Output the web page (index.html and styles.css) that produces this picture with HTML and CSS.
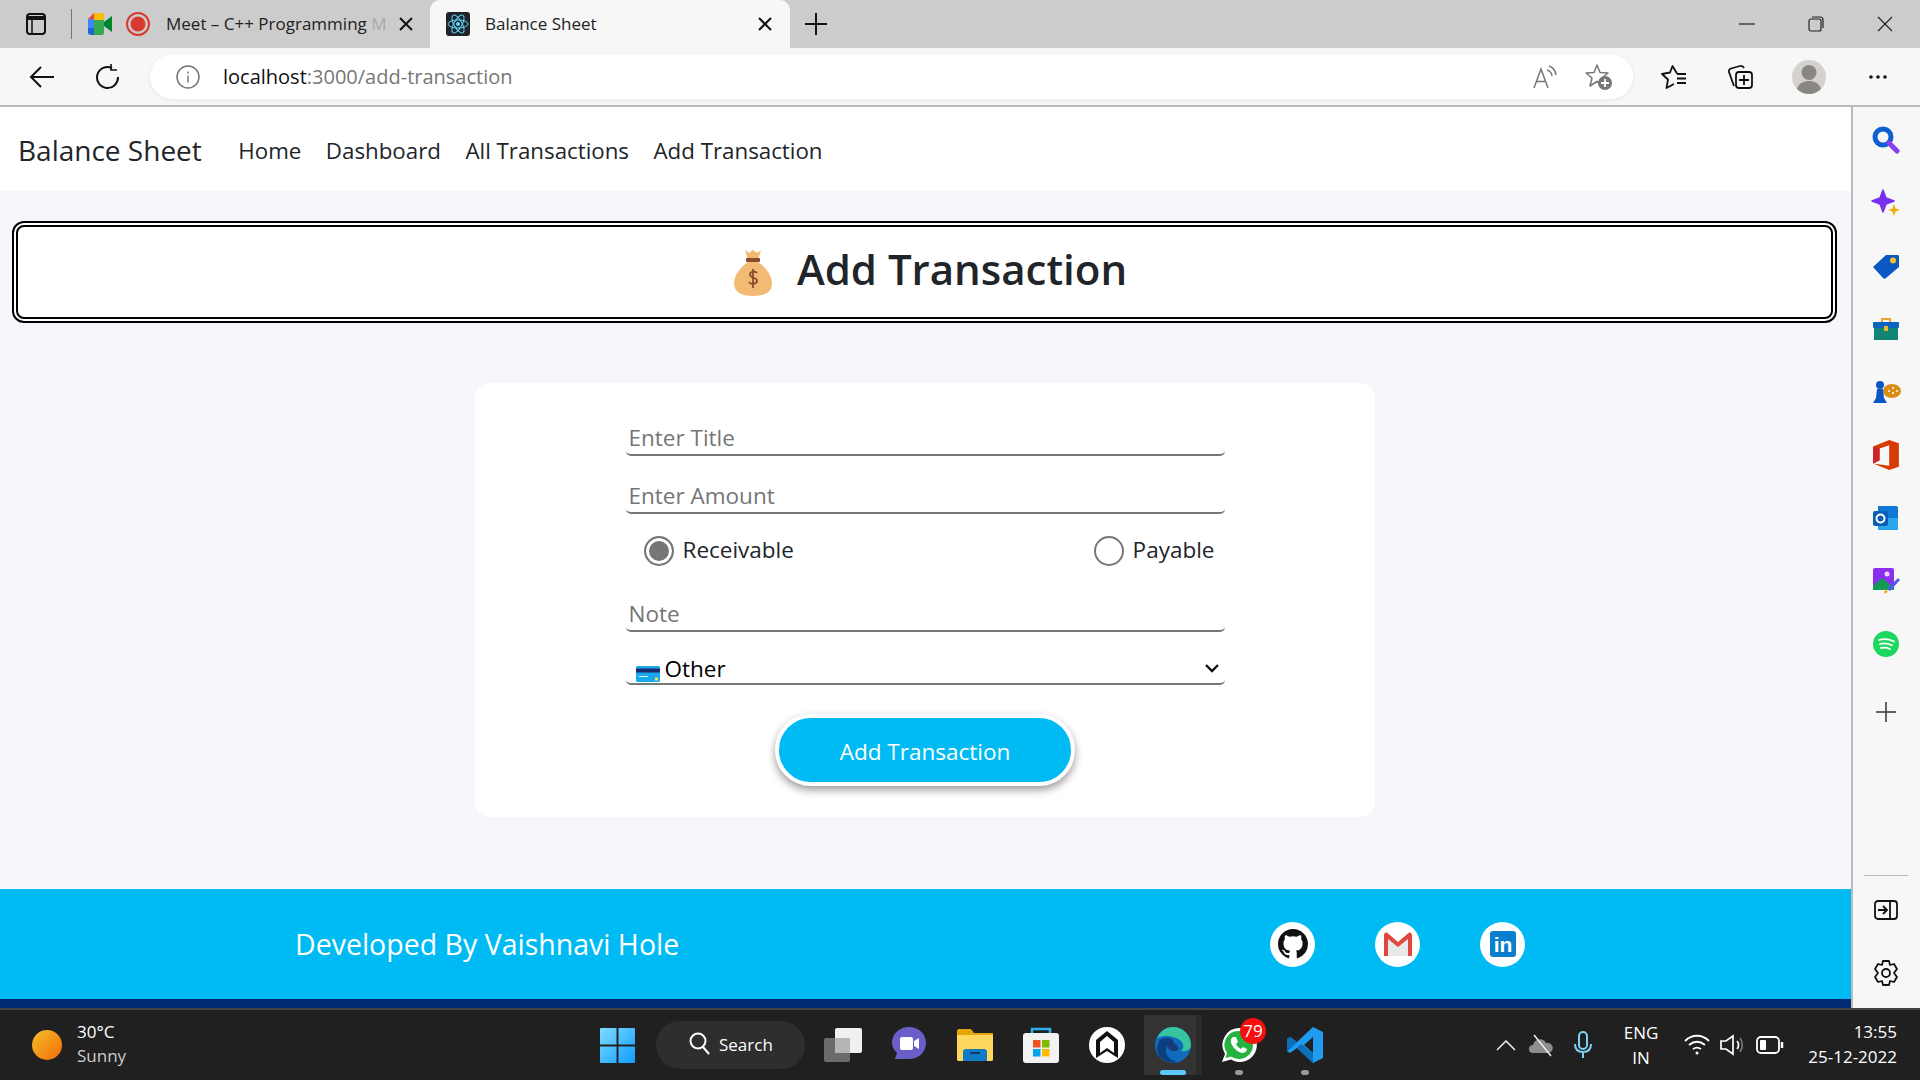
FILE: index.html
```html
<!DOCTYPE html>
<html>

	<head>
		<meta charset="UTF-8">
		<title>Balance Sheet</title>
		<link rel="stylesheet" href="styles.css">
	</head>

	<body>
		<div class="tabbar">
			<svg class="tab-panel" width="24" height="24" viewBox="0 0 24 24" fill="none" stroke="#111" stroke-width="2"><rect x="3" y="2" width="18" height="20" rx="3"/><path d="M3 6h18" stroke-width="4"/><path d="M8 8v13" stroke-width="1.5"/></svg>
			<span class="tab-divider"></span>
			<div class="tab tab-meet">
				<svg width="24" height="22" viewBox="0 0 24 22"><path d="M0 6l6-6h8v7H6v8H0z" fill="#ea4335"/><path d="M0 6h6v9H0z" fill="#4285f4"/><path d="M0 15h6v7H3a3 3 0 0 1-3-3z" fill="#1967d2"/><path d="M6 15h8v7H6z" fill="#34a853"/><path d="M6 0h8a2 2 0 0 1 2 2v5H6z" fill="#fbbc04"/><path d="M6 7h10v13a2 2 0 0 1-2 2h-3V15H6z" fill="#34a853"/><path d="M16 9l8-6v16l-8-6z" fill="#00832d"/></svg>
				<svg class="tab-rec" width="24" height="24" viewBox="0 0 24 24"><circle cx="12" cy="12" r="11" fill="none" stroke="#d93a30" stroke-width="2"/><circle cx="12" cy="12" r="7.5" fill="#d93a30"/></svg>
				<span class="tab-title">Meet – C++ Programming <span class="tab-fade">M</span></span>
				<svg class="tab-close" width="14" height="14" viewBox="0 0 14 14" stroke="#111" stroke-width="2"><path d="M1 1l12 12M13 1L1 13"/></svg>
			</div>
			<div class="tab tab-active">
				<svg width="24" height="24" viewBox="0 0 24 24" fill="none" stroke="#61dafb" stroke-width="1"><rect width="24" height="24" rx="3" fill="#20232a" stroke="none"/><ellipse cx="12" cy="12" rx="10" ry="4"/><ellipse cx="12" cy="12" rx="10" ry="4" transform="rotate(60 12 12)"/><ellipse cx="12" cy="12" rx="10" ry="4" transform="rotate(120 12 12)"/><circle cx="12" cy="12" r="2" fill="#61dafb" stroke="none"/></svg>
				<span class="tab-name">Balance Sheet</span>
				<svg class="tab-close" width="14" height="14" viewBox="0 0 14 14" stroke="#111" stroke-width="2"><path d="M1 1l12 12M13 1L1 13"/></svg>
			</div>
			<svg class="tab-new" width="24" height="24" viewBox="0 0 24 24" stroke="#111" stroke-width="2"><path d="M12 1v22M1 12h22"/></svg>
			<div class="win-controls">
				<svg width="16" height="16" viewBox="0 0 16 16" stroke="#222" stroke-width="1.2"><path d="M0 8h16"/></svg>
				<svg width="16" height="16" viewBox="0 0 16 16" fill="none" stroke="#222" stroke-width="1.2"><rect x="1" y="3" width="12" height="12" rx="2"/><path d="M4 1h8a3 3 0 0 1 3 3v8"/></svg>
				<svg width="16" height="16" viewBox="0 0 16 16" stroke="#222" stroke-width="1.2"><path d="M1 1l14 14M15 1L1 15"/></svg>
			</div>
		</div>

		<div class="toolbar">
			<svg class="tool-back" width="26" height="24" viewBox="0 0 26 24" fill="none" stroke="#111" stroke-width="2"><path d="M25 12H2M12 2L2 12l10 10"/></svg>
			<svg class="tool-reload" width="26" height="26" viewBox="0 0 26 26" fill="none" stroke="#111" stroke-width="2"><path d="M17 4a10.5 10.5 0 1 0 6 9"/><path d="M17 0v6h6" stroke-width="1.6" transform="translate(-1 0)"/></svg>
			<div class="address">
				<svg width="24" height="24" viewBox="0 0 24 24" fill="none" stroke="#777" stroke-width="1.5"><circle cx="12" cy="12" r="11"/><path d="M12 10.5v7M12 6.5v2"/></svg>
				<span class="url"><b>localhost</b>:3000/add-transaction</span>
				<svg class="addr-read" width="26" height="24" viewBox="0 0 26 24" fill="none" stroke="#777" stroke-width="1.5"><path d="M2 23L9 4l7 19M4.500 16.500h9"/><path d="M15 5a7 7 0 0 1 5 6M17 1a11 11 0 0 1 7 9"/></svg>
				<svg class="addr-star" width="28" height="28" viewBox="0 0 28 28"><path d="M12 2l3 7.500 8 .5-6 5 2 8-7-4.500L5 23l2-8-6-5 8-.5z" fill="none" stroke="#777" stroke-width="1.5" stroke-linejoin="round"/><circle cx="20" cy="20" r="7" fill="#777"/><path d="M20 16v8M16 20h8" stroke="#fff" stroke-width="1.800"/></svg>
			</div>
			<svg class="tool-fav" width="26" height="26" viewBox="0 0 26 26" fill="none" stroke="#111" stroke-width="1.800" stroke-linejoin="round"><path d="M16 9.500L11.500 2 9 8.500 1 10l6 5.500L5.500 24l7.500-4"/><path d="M16 10h9M16 14.500h9M16 19h9"/></svg>
			<svg class="tool-coll" width="26" height="26" viewBox="0 0 26 26" fill="none" stroke="#111" stroke-width="1.800"><path d="M7 22L2 8c-.5-2 .5-3 2-3.500L13 2c2-.5 3 0 4 2"/><rect x="9" y="8" width="16" height="16" rx="3"/><path d="M17 11v10M12 16h10"/></svg>
			<svg class="tool-user" width="34" height="34" viewBox="0 0 34 34"><circle cx="17" cy="17" r="17" fill="#d3d2ce"/><circle cx="17" cy="12.500" r="7.500" fill="#8a8783"/><path d="M5 29c2-6 7-8 12-8s10 2 12 8a17 17 0 0 1-24 0z" fill="#8a8783"/></svg>
			<svg class="tool-more" width="20" height="6" viewBox="0 0 20 6" fill="#111"><circle cx="3" cy="3" r="1.800"/><circle cx="10" cy="3" r="1.800"/><circle cx="17" cy="3" r="1.800"/></svg>
		</div>

		<div class="browser">
			<div class="page">
				<nav class="navbar">
					<a class="brand">Balance Sheet</a>
					<a class="nav-link">Home</a>
					<a class="nav-link">Dashboard</a>
					<a class="nav-link">All Transactions</a>
					<a class="nav-link">Add Transaction</a>
				</nav>

				<div class="page-head">
					<svg width="38" height="48" viewBox="0 0 38 48"><path d="M11 2l4 3 4-3 4 3 4-3-3 10H14z" fill="#f0b86e"/><rect x="12" y="10" width="14" height="4" rx="1" fill="#8a4b2d"/><path d="M14 14h10c8 5 14 14 14 21 0 9-7 13-19 13S0 44 0 35c0-7 6-16 14-21z" fill="#f2bb74"/><path d="M23 25c-1-2-7-2-7 1.500 0 4 7 2.500 7 6.500 0 3.500-7 3.500-8 1M19 21v19" fill="none" stroke="#8a4b2d" stroke-width="1.800"/></svg>
					<h1>Add Transaction</h1>
				</div>

				<div class="card">
					<form class="add-form">
						<input class="field" type="text" placeholder="Enter Title">
						<input class="field field-amount" type="text" placeholder="Enter Amount">
						<div class="radio-row">
							<label class="radio"><input type="radio" name="kind" checked> Receivable</label>
							<label class="radio"><input type="radio" name="kind"> Payable</label>
						</div>
						<input class="field" type="text" placeholder="Note">
						<div class="select">
							<svg class="select-card" width="24" height="16" viewBox="0 0 24 16"><rect width="24" height="16" rx="1.500" fill="#18a8ee"/><rect y="2.500" width="24" height="4" fill="#1b2a6b"/><path d="M3 10h9v1H3z" fill="#d9f1ff"/><rect x="19" y="11.500" width="3" height="3" fill="#f7e34b"/></svg>
							<span>Other</span>
							<svg class="select-arrow" width="14" height="9" viewBox="0 0 14 9" fill="none" stroke="#111" stroke-width="2.400"><path d="M1 1l6 6 6-6"/></svg>
						</div>
						<button class="submit" type="button">Add Transaction</button>
					</form>
				</div>

				<footer class="footer">
					<span class="footer-text">Developed By Vaishnavi Hole</span>
					<div class="socials">
						<a class="social"><svg width="30" height="30" viewBox="0 0 16 16" fill="#111"><path d="M8 0C3.580 0 0 3.580 0 8c0 3.540 2.290 6.530 5.470 7.590.4.070.55-.17.55-.38 0-.19-.01-.82-.01-1.490-2.010.37-2.530-.49-2.690-.94-.09-.23-.48-.94-.82-1.130-.28-.15-.68-.52-.01-.53.63-.01 1.080.58 1.230.82.72 1.210 1.870.87 2.330.66.07-.52.28-.87.51-1.070-1.780-.2-3.640-.89-3.640-3.950 0-.87.31-1.590.82-2.150-.08-.2-.36-1.020.08-2.120 0 0 .67-.21 2.200.82.64-.18 1.320-.27 2-.27.68 0 1.360.09 2 .27 1.530-1.040 2.200-.82 2.200-.82.44 1.100.16 1.920.08 2.120.51.56.82 1.270.82 2.150 0 3.070-1.870 3.750-3.650 3.950.29.25.54.73.54 1.480 0 1.070-.01 1.930-.01 2.200 0 .21.15.46.55.38A8.013 8.013 0 0 0 16 8c0-4.420-3.580-8-8-8z"/></svg></a>
						<a class="social"><svg width="30" height="24" viewBox="0 0 30 24"><path d="M3 4l12 10L27 4v20H3z" fill="#e8e8e8"/><path d="M1 24V3c0-2 2-3 3.500-2L15 10 25.500 1C27 0 29 1 29 3v21h-4V7L15 15 5 7v17z" fill="#e0483e"/></svg></a>
						<a class="social"><svg width="26" height="26" viewBox="0 0 26 26"><rect width="26" height="26" rx="3" fill="#0a7fd0"/><text x="13" y="21" text-anchor="middle" font-family="Liberation Sans" font-weight="bold" font-size="21" fill="#fff">in</text></svg></a>
					</div>
				</footer>
			</div>

			<aside class="sidebar">
				<div class="side-item"><svg width="28" height="28" viewBox="0 0 28 28"><circle cx="11" cy="11" r="8" fill="none" stroke="#0f5fd0" stroke-width="5"/><path d="M17 17l8 8" stroke="#8a3ff0" stroke-width="5" stroke-linecap="round"/></svg></div>
				<div class="side-item"><svg width="30" height="28" viewBox="0 0 30 28"><path d="M12 1l3 8 8 3-8 3-3 8-3-8-8-3 8-3z" fill="#7a2ff0" stroke="#7a2ff0" stroke-width="1.500" stroke-linejoin="round"/><path d="M23 15l1.600 4.400L29 21l-4.400 1.600L23 27l-1.600-4.400L17 21l4.400-1.600z" fill="#f2ab10"/></svg></div>
				<div class="side-item"><svg width="28" height="28" viewBox="0 0 28 28"><path d="M1 15L14 3h12a2 2 0 0 1 1 1v11L14 26c-1 1-2 1-3 0z" fill="#0b58c4"/><circle cx="21" cy="8.500" r="3" fill="#f6c12c"/></svg></div>
				<div class="side-item"><svg width="28" height="24" viewBox="0 0 28 24"><path d="M10 6V2h8v4" fill="none" stroke="#e6a52a" stroke-width="2"/><rect x="1" y="5" width="26" height="6" rx="1" fill="#0b64c0"/><rect x="2" y="11" width="24" height="12" fill="#118473"/><rect x="12" y="9" width="4" height="5" fill="#f0b72c"/></svg></div>
				<div class="side-item"><svg width="30" height="26" viewBox="0 0 30 26"><ellipse cx="21" cy="12" rx="9" ry="7" fill="#db8c14"/><circle cx="9" cy="6" r="4" fill="#0b58c4"/><path d="M6 10h6l1 9 3 5H2l3-5z" fill="#0b58c4"/><g fill="#fff"><circle cx="18" cy="12" r="1"/><circle cx="22" cy="9" r="1"/><circle cx="22" cy="14" r="1"/><circle cx="26" cy="12" r="1"/></g></svg></div>
				<div class="side-item"><svg width="26" height="30" viewBox="0 0 24 28"><path d="M0 6L15 0l9 3v22l-9 3L0 22l15 2V5L6 8v11l-6 3z" fill="#d83b01"/><path d="M0 6l6 2v11l-6 3z" fill="#d0212f"/></svg></div>
				<div class="side-item"><svg width="26" height="26" viewBox="0 0 26 26"><path d="M5 1h18a2 2 0 0 1 2 2v22H5z" fill="#0f78d4"/><path d="M5 13h20v12H5z" fill="#28a8ea"/><rect y="6" width="15" height="15" rx="2" fill="#0a5fb4"/><circle cx="7.500" cy="13.500" r="4" fill="none" stroke="#fff" stroke-width="2"/></svg></div>
				<div class="side-item"><svg width="30" height="28" viewBox="0 0 30 28"><rect x="2" y="1" width="21" height="22" rx="2" fill="#8a2ff0"/><circle cx="16" cy="7" r="2.500" fill="#f3d4ff"/><path d="M2 19l9-8 12 10v2H2z" fill="#129a53"/><path d="M16 22L27 11l2 2-10 11z" fill="#4d5cf0"/><path d="M14 22l3 3-4 2z" fill="#f2ab10"/></svg></div>
				<div class="side-item"><svg width="26" height="26" viewBox="0 0 26 26"><circle cx="13" cy="13" r="13" fill="#1ed760"/><path d="M6 9c5-1.500 10-1 15 1.500M7 13c4-1 8-.7 12 1.200M8 17c3-.7 6-.5 9 1" fill="none" stroke="#fff" stroke-width="1.800" stroke-linecap="round"/></svg></div>
				<div class="side-item side-plus"><svg width="20" height="20" viewBox="0 0 20 20" stroke="#333" stroke-width="1.500"><path d="M10 0v20M0 10h20"/></svg></div>
				<div class="side-bottom">
					<span class="side-rule"></span>
					<svg width="24" height="20" viewBox="0 0 24 20" fill="none" stroke="#111" stroke-width="1.800"><rect x="1" y="1" width="22" height="18" rx="3"/><path d="M16 1v18M4 10h8M9 6l4 4-4 4"/></svg>
					<svg width="26" height="28" viewBox="0 0 26 28" fill="none" stroke="#111" stroke-width="1.800"><path d="M10 2h6l1 4 4-1 3 5-3 4 3 4-3 5-4-1-1 4h-6l-1-4-4 1-3-5 3-4-3-4 3-5 4 1z" stroke-linejoin="round"/><circle cx="13" cy="14" r="4"/></svg>
				</div>
			</aside>
		</div>

		<div class="taskbar">
			<div class="weather">
				<span class="sun"></span>
				<div class="weather-text">
					<div>30°C</div>
					<div class="weather-sub">Sunny</div>
				</div>
			</div>
			<svg class="win-logo" width="35" height="35" viewBox="0 0 36 36"><defs><linearGradient id="wl" x1="0" y1="0" x2="1" y2="1"><stop offset="0" stop-color="#7fdcff"/><stop offset="1" stop-color="#0f9cff"/></linearGradient></defs><path d="M0 1a1 1 0 0 1 1-1h16v17H0zM19 0h16a1 1 0 0 1 1 1v16H19zM0 19h17v17H1a1 1 0 0 1-1-1zM19 19h17v16a1 1 0 0 1-1 1H19z" fill="url(#wl)"/></svg>
			<div class="search">
				<svg width="22" height="24" viewBox="0 0 22 24" fill="none" stroke="#fff" stroke-width="2"><circle cx="9" cy="9" r="7.500"/><path d="M14 15l6 7"/></svg>
				<span>Search</span>
			</div>
			<div class="task-icons">
				<div class="task"><svg width="38" height="34" viewBox="0 0 38 34"><rect x="0" y="10" width="26" height="24" rx="2" fill="#6b6b6b"/><rect x="11" y="0" width="27" height="25" rx="2" fill="#f0f0f0"/><rect x="11" y="10" width="15" height="15" fill="#b5b5b5"/></svg></div>
				<div class="task"><svg width="34" height="36" viewBox="0 0 34 36"><path d="M17 0c10 0 17 7 17 16s-7 16-17 16H3l2-6C2 23 0 20 0 16 0 7 7 0 17 0z" fill="#6a5fc9"/><rect x="8" y="10" width="13" height="13" rx="2" fill="#fff"/><path d="M22 14l5-3v11l-5-3z" fill="#fff"/></svg></div>
				<div class="task"><svg width="36" height="32" viewBox="0 0 36 32"><path d="M0 2a2 2 0 0 1 2-2h12l3 4h19v26a2 2 0 0 1-2 2H2a2 2 0 0 1-2-2z" fill="#e5a50a"/><path d="M0 6h36v24a2 2 0 0 1-2 2H2a2 2 0 0 1-2-2z" fill="#ffd75e"/><path d="M6 32v-9a3 3 0 0 1 3-3h18a3 3 0 0 1 3 3v9z" fill="#0f7bc4"/><path d="M13 24h10" stroke="#083f6e" stroke-width="2"/></svg></div>
				<div class="task"><svg width="36" height="36" viewBox="0 0 36 36"><path d="M9 7V2h18v5" fill="none" stroke="#2fb0ee" stroke-width="2.500"/><rect y="6" width="36" height="30" rx="3" fill="#f2f2f2"/><rect x="10" y="13" width="7.500" height="7.500" fill="#f25022"/><rect x="19" y="13" width="7.500" height="7.500" fill="#7fba00"/><rect x="10" y="22" width="7.500" height="7.500" fill="#00a4ef"/><rect x="19" y="22" width="7.500" height="7.500" fill="#ffb900"/></svg></div>
				<div class="task"><svg width="36" height="36" viewBox="0 0 36 36"><circle cx="18" cy="18" r="18" fill="#fff"/><path d="M18 4L7 13v18l11-7 11 7V13z" fill="#111"/><path d="M18 9l-7 6v11l7-5 7 5V15z" fill="#fff"/></svg></div>
				<div class="task task-active"><svg width="36" height="36" viewBox="0 0 36 36"><circle cx="18" cy="18" r="18" fill="#0f6cbd"/><path d="M2 12C5 4 11 0 18 0c10 0 18 8 18 18 0 5-5 7-10 6 3-2 3-7 0-10C20 9 6 7 2 12z" fill="#37c5a0"/><path d="M4 14c5-5 14-4 15 2-2-1-8 0-8 7 0 6 5 11 12 12-12 3-21-5-21-14z" fill="#0a3f80"/><path d="M19 16c4 3 7 8 1 8-5 0-9-3-8-8 1-2 5-2 7 0z" fill="#173a7a"/></svg><span class="run-bar"></span></div>
				<div class="task"><svg width="38" height="38" viewBox="0 0 38 38"><path d="M19 2A17 17 0 0 0 5 28L2 36l9-2.500A17 17 0 1 0 19 2z" fill="#fff"/><path d="M19 5A14 14 0 0 0 7 27l-1.500 5 5.500-1.500A14 14 0 1 0 19 5z" fill="#25b340"/><path d="M13 11c-2 1-3 4-1 8 2 4 6 7 10 8 3 0 5-2 5-4l-4-2-2 2c-2-1-4-3-5-5l2-2-2-5z" fill="#fff"/></svg><span class="badge">79</span><span class="run-dot"></span></div>
				<div class="task"><svg width="36" height="36" viewBox="0 0 36 36"><path d="M26 0l10 5v26l-10 5L10 21l-7 5-3-2v-12l3-2 7 5zM26 10l-9 8 9 8z" fill="#1f9cf0" fill-rule="evenodd"/><path d="M26 0L3 22l-3 2v-12l3-2 7 5L26 0zM26 36l-16-15 4-4 12 9z" fill="#0c6fba"/></svg><span class="run-dot"></span></div>
			</div>
			<div class="tray">
				<svg class="tray-up" width="20" height="11" viewBox="0 0 20 11" fill="none" stroke="#eee" stroke-width="1.500"><path d="M1 10l9-9 9 9"/></svg>
				<svg class="tray-cloud" width="26" height="24" viewBox="0 0 26 24"><path d="M5 20a4 4 0 0 1 0-8 7 7 0 0 1 13-2 5 5 0 0 1 3 10z" fill="#8e8e8e"/><path d="M6 2l17 21" stroke="#eee" stroke-width="1.500"/></svg>
				<svg class="tray-mic" width="18" height="28" viewBox="0 0 18 28" fill="none" stroke="#7fd0f2" stroke-width="2"><rect x="5" y="1" width="8" height="17" rx="4"/><path d="M1 13c0 5 3 8 8 8s8-3 8-8M9 21v6"/></svg>
				<div class="lang"><div>ENG</div><div>IN</div></div>
				<svg class="tray-wifi" width="26" height="22" viewBox="0 0 26 22" fill="none" stroke="#fff" stroke-width="1.800"><path d="M1 7c7-7 17-7 24 0M5 11c5-4 11-4 16 0M9 15c3-2 5-2 8 0"/><circle cx="13" cy="19" r="1.500" fill="#fff" stroke="none"/></svg>
				<svg class="tray-sound" width="26" height="22" viewBox="0 0 26 22" fill="none" stroke="#fff" stroke-width="1.700"><path d="M1 7v8h5l7 5V2L6 7z"/><path d="M17 7c2 2 2 6 0 8"/><path d="M20 4c3 4 3 10 0 14" stroke="#777"/></svg>
				<svg class="tray-battery" width="28" height="20" viewBox="0 0 28 20" fill="none" stroke="#fff" stroke-width="1.800"><rect x="1" y="2" width="22" height="16" rx="4"/><rect x="4" y="5" width="6" height="10" rx="1" fill="#fff" stroke="none"/><path d="M26 7v6" stroke-width="2.500"/></svg>
				<div class="clock"><div>13:55</div><div>25-12-2022</div></div>
			</div>
		</div>
	</body>

</html>
```

FILE: styles.css
```css
* {
	margin: 0;
	padding: 0;
	box-sizing: border-box;
}

html,
body {
	width: 1920px;
	height: 1080px;
	overflow: hidden;
}

body {
	display: flex;
	flex-direction: column;
	font-family: "Open Sans", "Liberation Sans", sans-serif;
	color: #212529;
}

svg {
	flex: none;
	display: block;
}

/* browser tabs */
.tabbar {
	height: 48px;
	background: #ccc;
	display: flex;
	align-items: center;
	font-size: 17px;
	color: #222;
}

.tab-panel {
	margin-left: 24px;
}

.tab-divider {
	width: 1px;
	height: 30px;
	background: #777;
	margin: 0 16px 0 23px;
}

.tab {
	display: flex;
	align-items: center;
}

.tab-meet {
	width: 342px;
}

.tab-rec {
	margin-left: 14px;
}

.tab-title {
	width: 224px;
	margin: -2px 0 0 16px;
	white-space: nowrap;
}

.tab-fade {
	opacity: 0.2;
}

.tab-meet .tab-close {
	margin-left: 9px;
}

.tab-active {
	width: 360px;
	height: 48px;
	padding-left: 16px;
	background: #f7f7f7;
	border-radius: 10px 10px 0 0;
}

.tab-name {
	margin: -2px 0 0 15px;
}

.tab-active .tab-close {
	margin-left: auto;
	margin-right: 18px;
}

.tab-new {
	margin-left: 14px;
}

.win-controls {
	margin-left: auto;
	margin-right: 27px;
	display: flex;
	gap: 53px;
}

/* address bar */
.toolbar {
	height: 59px;
	background: #f7f7f7;
	border-bottom: 2px solid #bbb;
	display: flex;
	align-items: center;
}

.tool-back {
	margin-left: 29px;
}

.tool-reload {
	margin-left: 40px;
}

.address {
	width: 1483px;
	height: 45px;
	margin-left: 29px;
	background: #fff;
	border-radius: 23px;
	box-shadow: 0 1px 4px rgba(0, 0, 0, 0.08);
	display: flex;
	align-items: center;
	padding-left: 26px;
	font-size: 20px;
	color: #777;
}

.url {
	margin-left: 23px;
}

.url b {
	font-weight: 400;
	color: #111;
}

.addr-read {
	margin-left: auto;
}

.addr-star {
	margin: 0 20px 0 27px;
}

.tool-fav {
	margin-left: 28px;
}

.tool-coll {
	margin-left: 40px;
}

.tool-user {
	margin-left: 39px;
}

.tool-more {
	margin-left: 42px;
}

.browser {
	flex: 1;
	min-height: 0;
	display: flex;
}

/* the app */
.page {
	width: 1851px;
	background: #f5f7fb;
	display: flex;
	flex-direction: column;
}

.navbar {
	height: 84px;
	background: #fff;
	display: flex;
	align-items: center;
	padding: 2px 0 0 18px;
	gap: 24.5px;
	font-size: 22.3px;
}

.brand {
	font-size: 28px;
	margin-right: 12px;
}

.page-head {
	height: 102px;
	margin: 30px 14px 0 12px;
	padding: 0 0 8px 12px;
	background: #fff;
	border: 6px double #000;
	border-radius: 12px;
	display: flex;
	align-items: center;
	justify-content: center;
	gap: 25px;
}

.page-head svg {
	margin-top: 8px;
}

.page-head h1 {
	font-size: 42px;
	font-weight: 600;
}

.card {
	width: 900px;
	height: 434px;
	margin: 60px 0 0 475px;
	background: #fff;
	border-radius: 15px;
	padding-top: 34px;
}

.add-form {
	width: 599px;
	margin: 0 auto;
	display: flex;
	flex-direction: column;
}

.field {
	height: 39px;
	border: 0;
	border-bottom: 2px solid #777;
	border-radius: 5px;
	padding: 3px 0 0 3px;
	font: 22.5px "Open Sans", "Liberation Sans", sans-serif;
	outline: none;
}

.field::placeholder {
	color: #757575;
}

.field-amount {
	margin-top: 19px;
}

.radio-row {
	height: 79px;
	padding: 22px 10px 0 18px;
	display: flex;
	justify-content: space-between;
	font-size: 22.5px;
}

.radio {
	display: flex;
	align-items: flex-start;
	gap: 9px;
	line-height: 28px;
}

.radio input {
	appearance: none;
	width: 30px;
	height: 30px;
	border: 2px solid #767676;
	border-radius: 50%;
	background: #fff;
}

.radio input:checked {
	background: #767676;
	box-shadow: inset 0 0 0 3px #fff;
}

.select {
	height: 41px;
	margin-top: 12px;
	border-bottom: 2px solid #777;
	border-radius: 5px;
	padding: 10px 6px 0 10px;
	display: flex;
	align-items: center;
	gap: 5px;
	font-size: 22.5px;
	color: #000;
}

.select-card {
	margin-top: 10px;
}

.select-arrow {
	margin-left: auto;
}

.submit {
	width: 300px;
	height: 72px;
	margin: 29px auto 0;
	padding-top: 3px;
	background: #00bbf3;
	border: 4px solid #fff;
	border-radius: 36px;
	box-shadow: 0 4px 9px rgba(0, 0, 0, 0.4);
	font: 22.5px "Open Sans", "Liberation Sans", sans-serif;
	color: #fff;
}

.footer {
	height: 119px;
	margin-top: auto;
	background: #00bbf3;
	border-bottom: 9px solid #002b73;
	display: flex;
	align-items: center;
	padding: 0 326px 0 295px;
	color: #fff;
}

.footer-text {
	font-size: 28.5px;
}

.socials {
	margin-left: auto;
	display: flex;
	gap: 60px;
}

.social {
	width: 45px;
	height: 45px;
	background: #fff;
	border-radius: 50%;
	display: flex;
	align-items: center;
	justify-content: center;
}

/* edge sidebar */
.sidebar {
	flex: 1;
	background: #f7f7f7;
	border-left: 2px solid #bbb;
	display: flex;
	flex-direction: column;
	padding-top: 1px;
}

.side-item {
	height: 63px;
	padding-right: 2px;
	display: flex;
	align-items: center;
	justify-content: center;
}

.side-plus {
	margin-top: 5px;
}

.side-bottom {
	margin-top: auto;
	padding: 0 2px 21px 0;
	display: flex;
	flex-direction: column;
	align-items: center;
	gap: 39px;
}

.side-rule {
	width: 44px;
	height: 1px;
	background: #bbb;
	margin-bottom: -15px;
}

/* windows taskbar */
.taskbar {
	height: 72px;
	background: #202020;
	border-top: 2px solid #444;
	display: flex;
	align-items: center;
	color: #fff;
	font-size: 17px;
}

.weather {
	width: 600px;
	padding-left: 32px;
	display: flex;
	align-items: center;
	gap: 15px;
}

.sun {
	width: 30px;
	height: 30px;
	border-radius: 50%;
	background: linear-gradient(135deg, #f5c02a, #f26a06);
}

.weather-text {
	line-height: 24px;
	padding-bottom: 3px;
}

.weather-sub {
	color: #ccc;
}

.search {
	width: 149px;
	height: 48px;
	margin-left: 21px;
	padding: 0 0 2px 33px;
	background: #2e2e2e;
	border-radius: 24px;
	display: flex;
	align-items: center;
	gap: 8px;
}

.task-icons {
	margin-left: 5px;
	display: flex;
}

.task {
	width: 66px;
	height: 60px;
	display: flex;
	align-items: center;
	justify-content: center;
	position: relative;
}

.task-active {
	background: linear-gradient(to right, transparent 4px, #333 4px, #333 56px, #2a2a2a 56px, #2a2a2a 62px, transparent 62px);
}

.run-bar {
	position: absolute;
	left: 20px;
	bottom: 0;
	width: 26px;
	height: 5px;
	border-radius: 3px;
	background: #5cc8fb;
}

.run-dot {
	position: absolute;
	left: 29px;
	bottom: 0;
	width: 8px;
	height: 5px;
	border-radius: 3px;
	background: #999;
}

.badge {
	position: absolute;
	left: 34px;
	top: 3px;
	width: 26px;
	height: 26px;
	border-radius: 50%;
	background: #f50f0f;
	font-size: 17px;
	line-height: 26px;
	text-align: center;
}

.tray {
	margin-left: auto;
	padding-right: 23px;
	display: flex;
	align-items: center;
}

.tray-cloud {
	margin-left: 12px;
}

.tray-mic {
	margin-left: 20px;
}

.lang {
	margin-left: 32px;
	text-align: center;
	line-height: 25px;
	padding-bottom: 1px;
}

.tray-wifi {
	margin-left: 26px;
}

.tray-sound {
	margin-left: 10px;
}

.tray-battery {
	margin-left: 10px;
}

.clock {
	margin-left: 24px;
	text-align: right;
	line-height: 25px;
	padding-bottom: 3px;
}
```
